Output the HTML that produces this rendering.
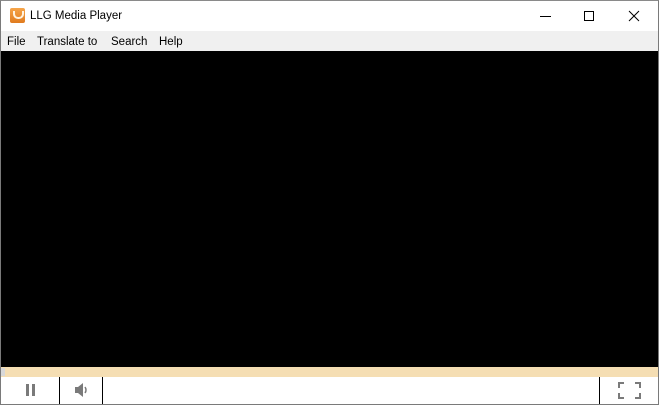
<!DOCTYPE html>
<html><head><style>
*{margin:0;padding:0;box-sizing:border-box}
body{width:659px;height:405px;overflow:hidden;background:#fff;font-family:"Liberation Sans",sans-serif;position:relative}
.win{position:absolute;left:0;top:0;width:659px;height:405px;border:1px solid #7a7a7a;border-top-color:#8a8a8a}
.title{position:absolute;left:0;top:0;width:657px;height:30px;background:#fff}
.title .t{position:absolute;left:29px;top:9px;font-size:11.5px;color:#000}
.icon{position:absolute;left:9px;top:7px;width:15px;height:15px;border-radius:2px;background:linear-gradient(#f6a54a,#e07b1e)}
.icon:after{content:"";position:absolute;left:3px;top:3px;width:7px;height:6px;border:2px solid #fff3e0;border-top:none;border-radius:0 0 5px 5px}
.menu{position:absolute;left:0;top:30px;width:657px;height:20px;background:#f0f0f0;font-size:11.5px}
.menu span{position:absolute;top:5px}
.video{position:absolute;left:0;top:50px;width:657px;height:316px;background:#000}
.prog{position:absolute;left:0;top:366px;width:657px;height:10px;background:#f5deb3}
.thumb{position:absolute;left:0;top:367px;width:4px;height:8px;background:#d8d8d8}
.ctrl{position:absolute;left:0;top:376px;width:657px;height:27px;background:#fff}
.div{position:absolute;top:376px;width:1px;height:27px;background:#000}
</style></head><body>
<div class="win">
<div class="title">
<div class="icon"></div>
<div class="t">LLG Media Player</div>
<svg style="position:absolute;left:530px;top:5px" width="120" height="20">
<line x1="9" y1="10.5" x2="20" y2="10.5" stroke="#000" stroke-width="1"/>
<rect x="53.5" y="5.5" width="9" height="9" fill="none" stroke="#000"/>
<path d="M98 5 L108 15 M108 5 L98 15" stroke="#000" stroke-width="1"/>
</svg>
</div>
<div class="menu">
<span style="left:6px">File</span>
<span style="left:36px">Translate to</span>
<span style="left:110px">Search</span>
<span style="left:158px">Help</span>
</div>
<div class="video"></div>
<div class="prog"></div>
<div class="thumb"></div>
<div class="ctrl"></div>
<div class="div" style="left:58px"></div>
<div class="div" style="left:101px"></div>
<div class="div" style="left:598px"></div>
<svg style="position:absolute;left:0;top:376px" width="657" height="27">
<rect x="25" y="7" width="3" height="12" fill="#7a7a7a"/>
<rect x="31" y="7" width="3" height="12" fill="#7a7a7a"/>
<path d="M74 10 H77 L82 6 V20 L77 16 H74 Z" fill="#7a7a7a"/>
<path d="M84 10 Q86 13 84 16" fill="none" stroke="#7a7a7a" stroke-width="1.5"/>
<path d="M618 11 V6 H623 M634 6 H639 V11 M639 16 V21 H634 M623 21 H618 V16" fill="none" stroke="#7a7a7a" stroke-width="2"/>
</svg>
</div>
</body></html>
